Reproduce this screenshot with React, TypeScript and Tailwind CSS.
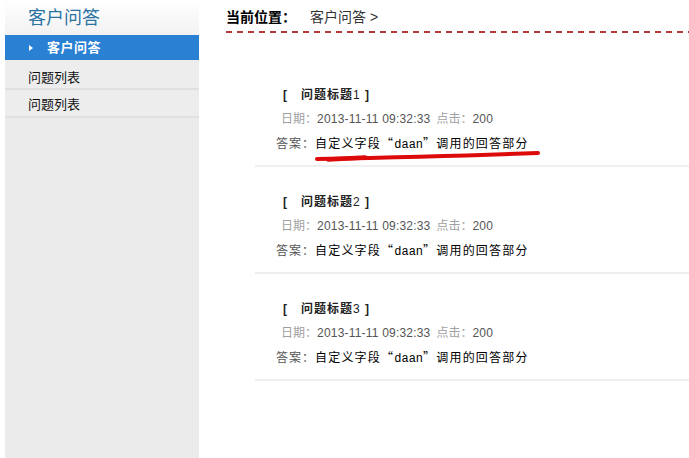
import React from "react";

const items = [1, 2, 3];

function Item({ n, underline }: { n: number; underline?: boolean }) {
  return (
    <div className="relative pt-[24px] pb-[11px] border-b-2 border-[#efefef]">
      <div className="h-[23px] leading-[23px] pl-[28px] text-[12px] font-bold text-[#222] tracking-[1px]">
        [&nbsp;&nbsp; 问题标题<span className="font-normal">{n}</span> ]
      </div>
      <div className="h-[23px] leading-[23px] pl-[26px] text-[12px] mt-[1px]">
        <span className="text-[#a0a0a0]">日期：</span>
        <span className="text-[#555] tracking-[0.2px]">2013-11-11 09:32:33</span>
        <span className="text-[#a0a0a0] ml-[6px]">点击：</span>
        <span className="text-[#555] tracking-[0.2px]">200</span>
      </div>
      <div className="h-[23px] leading-[23px] pl-[21px] text-[12px]">
        <span className="text-[#555] tracking-[1px]">答案：</span>
        <span className="text-black tracking-[1.2px]">
          自定义字段
          <span className="font-[family-name:'Noto_Sans_CJK_SC']">“</span>
          <span className="font-mono tracking-[0px]">daan</span>
          <span className="font-[family-name:'Noto_Sans_CJK_SC']">”</span>
          调用的回答部分
        </span>
      </div>
      {underline && (
        <svg
          className="absolute left-[55px] top-[89px]"
          width="235"
          height="16"
          viewBox="0 0 235 16"
        >
          <path
            d="M7 10 C 60 9, 150 7, 228 4"
            stroke="#dd0a0a"
            strokeWidth="4"
            fill="none"
            strokeLinecap="round"
          />
          <path
            d="M18 10.5 L 55 8.5"
            stroke="#dd0a0a"
            strokeWidth="4.5"
            fill="none"
            strokeLinecap="round"
          />
        </svg>
      )}
    </div>
  );
}

export default function App() {
  return (
    <div className="flex w-[689px] h-[458px] bg-white overflow-hidden font-[family-name:'Liberation_Sans','Noto_Sans_CJK_SC',sans-serif]">
      <aside className="ml-[5px] w-[194px] h-full bg-[#ebebeb] flex flex-col">
        <div className="h-[35px] bg-gradient-to-b from-white to-[#f2f2f2] pl-[23px] pt-[5px] text-[18px] leading-[26px] text-[#2a72a2]">
          客户问答
        </div>
        <div className="h-[25px] bg-[#2a80d2] flex items-center pl-[24px]">
          <svg width="4" height="6" viewBox="0 0 4 6" className="mr-[14px]">
            <path d="M0 0 L4 3 L0 6 Z" fill="#fff" />
          </svg>
          <span className="text-[13px] font-bold text-white tracking-[0.5px]">客户问答</span>
        </div>
        <div className="h-[30px] pt-[9px] leading-[18px] pl-[23px] text-[13px] text-[#111] border-b-2 border-[#e0e0e0] bg-[#ededed]">
          问题列表
        </div>
        <div className="h-[28px] pt-[6px] leading-[18px] pl-[23px] text-[13px] text-[#111] border-b-2 border-[#e0e0e0] bg-[#ededed]">
          问题列表
        </div>
      </aside>
      <main className="flex-1 flex flex-col">
        <div className="ml-[27px] pt-[7px]">
          <div className="h-[20px] leading-[20px] flex items-center">
            <span className="text-[14px] font-bold text-black">当前位置：</span>
            <span className="ml-[14px] text-[14px] text-[#333]">客户问答 &gt;</span>
          </div>
          <div className="mt-[4px] h-[2px] bg-[repeating-linear-gradient(to_right,#b33a3a_0px,#b33a3a_6px,transparent_6px,transparent_11px)]" />
        </div>
        <div className="ml-[56px] mt-[27px] flex flex-col">
          {items.map((n) => (
            <Item key={n} n={n} underline={n === 1} />
          ))}
        </div>
      </main>
    </div>
  );
}
